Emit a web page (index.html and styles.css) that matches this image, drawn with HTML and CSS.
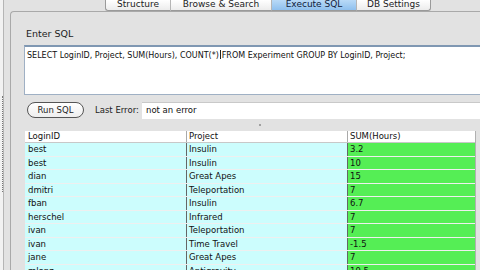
FILE: index.html
```html
<!DOCTYPE html>
<html>
<head>
<meta charset="utf-8">
<link rel="stylesheet" href="styles.css">
</head>
<body>
<div class="edge">
  <div class="ruler"></div>
</div>
<div class="main">
  <div class="tabs">
    <div class="tab first w1">Structure</div>
    <div class="tab w2">Browse &amp; Search</div>
    <div class="tab sel w3">Execute SQL</div>
    <div class="tab last w4">DB Settings</div>
  </div>
  <div class="panel">
    <div class="label">Enter SQL</div>
    <div class="sqlbox">SELECT LoginID, Project, SUM(Hours), COUNT(*)<span class="caret"></span>FROM Experiment GROUP BY LoginID, Project;</div>
    <div class="runrow">
      <div class="btn">Run SQL</div>
      <div class="errlabel">Last Error:</div>
      <div class="errfield">not an error</div>
    </div>
    <div class="splitter"><span class="dot"></span></div>
    <div class="table">
      <div class="row head">
        <div class="c c1">LoginID</div><div class="c c2">Project</div><div class="c c3">SUM(Hours)</div>
      </div>
      <div class="row"><div class="c c1">best</div><div class="c c2">Insulin</div><div class="c c3">3.2</div></div>
      <div class="row"><div class="c c1">best</div><div class="c c2">Insulin</div><div class="c c3">10</div></div>
      <div class="row"><div class="c c1">dian</div><div class="c c2">Great Apes</div><div class="c c3">15</div></div>
      <div class="row"><div class="c c1">dmitri</div><div class="c c2">Teleportation</div><div class="c c3">7</div></div>
      <div class="row"><div class="c c1">fban</div><div class="c c2">Insulin</div><div class="c c3">6.7</div></div>
      <div class="row"><div class="c c1">herschel</div><div class="c c2">Infrared</div><div class="c c3">7</div></div>
      <div class="row"><div class="c c1">ivan</div><div class="c c2">Teleportation</div><div class="c c3">7</div></div>
      <div class="row"><div class="c c1">ivan</div><div class="c c2">Time Travel</div><div class="c c3">-1.5</div></div>
      <div class="row"><div class="c c1">jane</div><div class="c c2">Great Apes</div><div class="c c3">7</div></div>
      <div class="row"><div class="c c1">mlanz</div><div class="c c2">Antigravity</div><div class="c c3">19.5</div></div>
    </div>
  </div>
</div>
</body>
</html>
```
FILE: styles.css
```css
html, body {
  margin: 0;
  padding: 0;
}
body {
  width: 480px;
  height: 270px;
  overflow: hidden;
  background: #e2e2e2;
  font-family: "DejaVu Sans", "Liberation Sans", sans-serif;
  color: #1a1a1a;
  display: flex;
}
.edge {
  width: 3px;
  flex: none;
  background: #f2f2f2;
  border-right: 1px solid #b5b5b5;
  padding-top: 96px;
}
.ruler {
  height: 96px;
  margin-left: 0px;
  border-right: 1px dotted #777;
  width: 2px;
}
.main {
  flex: 1;
  margin-left: 6px;
  display: flex;
  flex-direction: column;
  min-width: 0;
}
.tabs {
  display: flex;
  height: 11px;
  margin-left: 95px;
  flex: none;
}
.tab {
  height: 10px;
  font-size: 9px;
  line-height: 8px;
  text-align: center;
  background: linear-gradient(#ffffff, #ececec);
  border-bottom: 1px solid #9a9a9a;
  border-right: 1px solid #b5b5b5;
  color: #222;
  overflow: hidden;
  white-space: nowrap;
}
.tab.first {
  border-left: 1px solid #9a9a9a;
  border-bottom-left-radius: 3px;
}
.tab.last {
  border-right: 1px solid #9a9a9a;
  border-bottom-right-radius: 3px;
}
.tab.sel {
  background: linear-gradient(#b9daf7, #8fc0ee);
  color: #10203a;
}
.w1 { width: 64px; }
.w2 { width: 100px; }
.w3 { width: 84px; }
.w4 { width: 73px; }
.panel {
  flex: 1;
  border-top: 1px solid #a9a9a9;
  border-left: 1px solid #a9a9a9;
  border-top-left-radius: 4px;
  padding-left: 13px;
  display: flex;
  flex-direction: column;
  min-width: 0;
}
.label {
  margin-top: 16px;
  padding-left: 2px;
  font-size: 9.5px;
  line-height: 12px;
  height: 12px;
  color: #1c1c1c;
}
.sqlbox {
  margin-top: 5px;
  height: 47px;
  margin-right: -10px;
  background: #fff;
  border: 1px solid #9fb0c4;
  border-top: 2px solid #7f97b2;
  font-size: 8px;
  line-height: 10px;
  padding: 3px 0 0 2px;
  box-sizing: border-box;
  height: 50px;
  white-space: nowrap;
  overflow: hidden;
  color: #111;
}
.caret {
  display: inline-block;
  width: 1px;
  height: 9px;
  background: #222;
  vertical-align: -1px;
  margin: 0 1px;
}
.runrow {
  display: flex;
  align-items: center;
  margin-top: 6px;
  height: 18px;
}
.btn {
  margin-left: 3px;
  width: 57px;
  height: 16px;
  box-sizing: border-box;
  border: 1px solid #555;
  border-radius: 8px;
  background: linear-gradient(#ffffff, #eeeeee);
  font-size: 8.5px;
  line-height: 14px;
  text-align: center;
  color: #222;
}
.errlabel {
  margin-left: 11px;
  font-size: 8.5px;
  width: 47px;
  color: #222;
}
.errfield {
  flex: 1;
  align-self: flex-end;
  height: 17px;
  background: #fff;
  border-top: 1px solid #c9c9c9;
  font-size: 8.5px;
  line-height: 15px;
  padding-left: 4px;
  box-sizing: border-box;
  color: #111;
}
.splitter {
  height: 12px;
  display: flex;
  justify-content: center;
  align-items: center;
}
.dot {
  width: 2px;
  height: 2px;
  background: #8a8a8a;
  border-radius: 1px;
  margin-left: 16px;
}
.table {
  margin-left: 1px;
  margin-right: 4px;
  border-right: 1px solid #b0b0b0;
  flex: 1;
  overflow: hidden;
}
.row {
  display: flex;
  height: 13.5px;
  box-sizing: border-box;
  border-bottom: 1px solid rgba(255, 255, 255, 0.45);
}
.row.head {
  height: 12px;
  background: #fff;
  border-bottom: 1px solid #c8c8c8;
}
.c {
  font-size: 8.5px;
  line-height: 12px;
  padding-left: 3px;
  white-space: nowrap;
  overflow: hidden;
  color: #111;
}
.c1 { width: 161px; background: #ccfdfd; }
.c2 { width: 161px; background: #ccfdfd; border-left: 1px solid #666; box-sizing: border-box; padding-left: 2px; }
.c3 { flex: 1; background: #55ee55; border-left: 1px solid #666; padding-left: 2px; }
.head .c { background: #fff; line-height: 11px; }
.head .c2, .head .c3 { border-left: 1px solid #aaa; }
.c1 { box-sizing: border-box; }
```
